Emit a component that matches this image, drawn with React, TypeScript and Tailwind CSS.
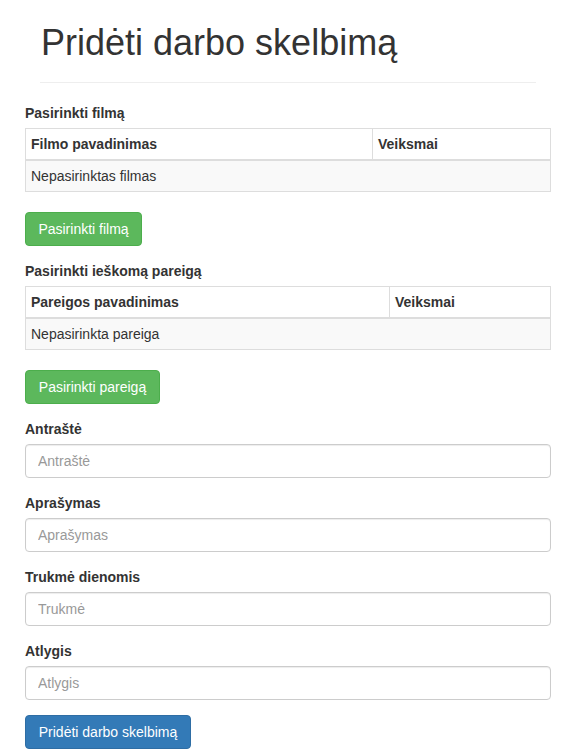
const inputCls =
  "block w-full h-[34px] px-3 py-[6px] text-[14px] leading-5 text-[#555] bg-white border border-[#ccc] rounded-[4px] shadow-[inset_0_1px_1px_rgba(0,0,0,0.075)] placeholder:text-[#999] outline-none";

const labelCls = "inline-block mb-[5px] font-bold leading-5";

function PickTable({ title, nameHeader, empty, firstCol }: { title: string; nameHeader: string; empty: string; firstCol: string }) {
  return (
    <>
      <label className={labelCls}>{title}</label>
      <table className="w-full border-collapse border border-[#ddd] mb-5">
        <thead>
          <tr>
            <th className={`text-left font-bold px-[5px] py-[5px] leading-5 border border-[#ddd] border-b-2 ${firstCol}`}>
              {nameHeader}
            </th>
            <th className="text-left font-bold px-[5px] py-[5px] leading-5 border border-[#ddd] border-b-2">Veiksmai</th>
          </tr>
        </thead>
        <tbody>
          <tr className="bg-[#f9f9f9]">
            <td colSpan={2} className="px-[5px] py-[5px] leading-5 border border-[#ddd]">
              {empty}
            </td>
          </tr>
        </tbody>
      </table>
    </>
  );
}

function Field({ label, placeholder }: { label: string; placeholder: string }) {
  return (
    <div className="mb-[15px]">
      <label className={labelCls}>{label}</label>
      <input className={inputCls} placeholder={placeholder} />
    </div>
  );
}

export default function App() {
  return (
    <div
      className="min-h-screen bg-white text-[#333] text-[14px] leading-5"
      style={{ fontFamily: '"Liberation Sans", Arial, sans-serif' }}
    >
      <div className="w-[526px] ml-[25px]">
        <div className="px-[15px]">
          <div className="mt-[23px] mb-5 pb-[9px] border-b border-[#eee]">
            <h1 className="text-[36px] leading-[1.1] font-normal mb-[10px] pl-px">Pridėti darbo skelbimą</h1>
          </div>
        </div>

        <PickTable title="Pasirinkti filmą" nameHeader="Filmo pavadinimas" empty="Nepasirinktas filmas" firstCol="w-[347px]" />
        <div className="mb-[15px]">
          <button className="w-[117px] h-[34px] py-[6px] text-white bg-[#5cb85c] border border-[#4cae4c] rounded-[4px] leading-5">
            Pasirinkti filmą
          </button>
        </div>

        <PickTable
          title="Pasirinkti ieškomą pareigą"
          nameHeader="Pareigos pavadinimas"
          empty="Nepasirinkta pareiga"
          firstCol="w-[364px]"
        />
        <div className="mb-[15px]">
          <button className="w-[135px] h-[34px] py-[6px] text-white bg-[#5cb85c] border border-[#4cae4c] rounded-[4px] leading-5">
            Pasirinkti pareigą
          </button>
        </div>

        <Field label="Antraštė" placeholder="Antraštė" />
        <Field label="Aprašymas" placeholder="Aprašymas" />
        <Field label="Trukmė dienomis" placeholder="Trukmė" />
        <Field label="Atlygis" placeholder="Atlygis" />

        <button className="w-[166px] h-[34px] py-[6px] text-white bg-[#337ab7] border border-[#2e6da4] rounded-[4px] leading-5">
          Pridėti darbo skelbimą
        </button>
      </div>
    </div>
  );
}
